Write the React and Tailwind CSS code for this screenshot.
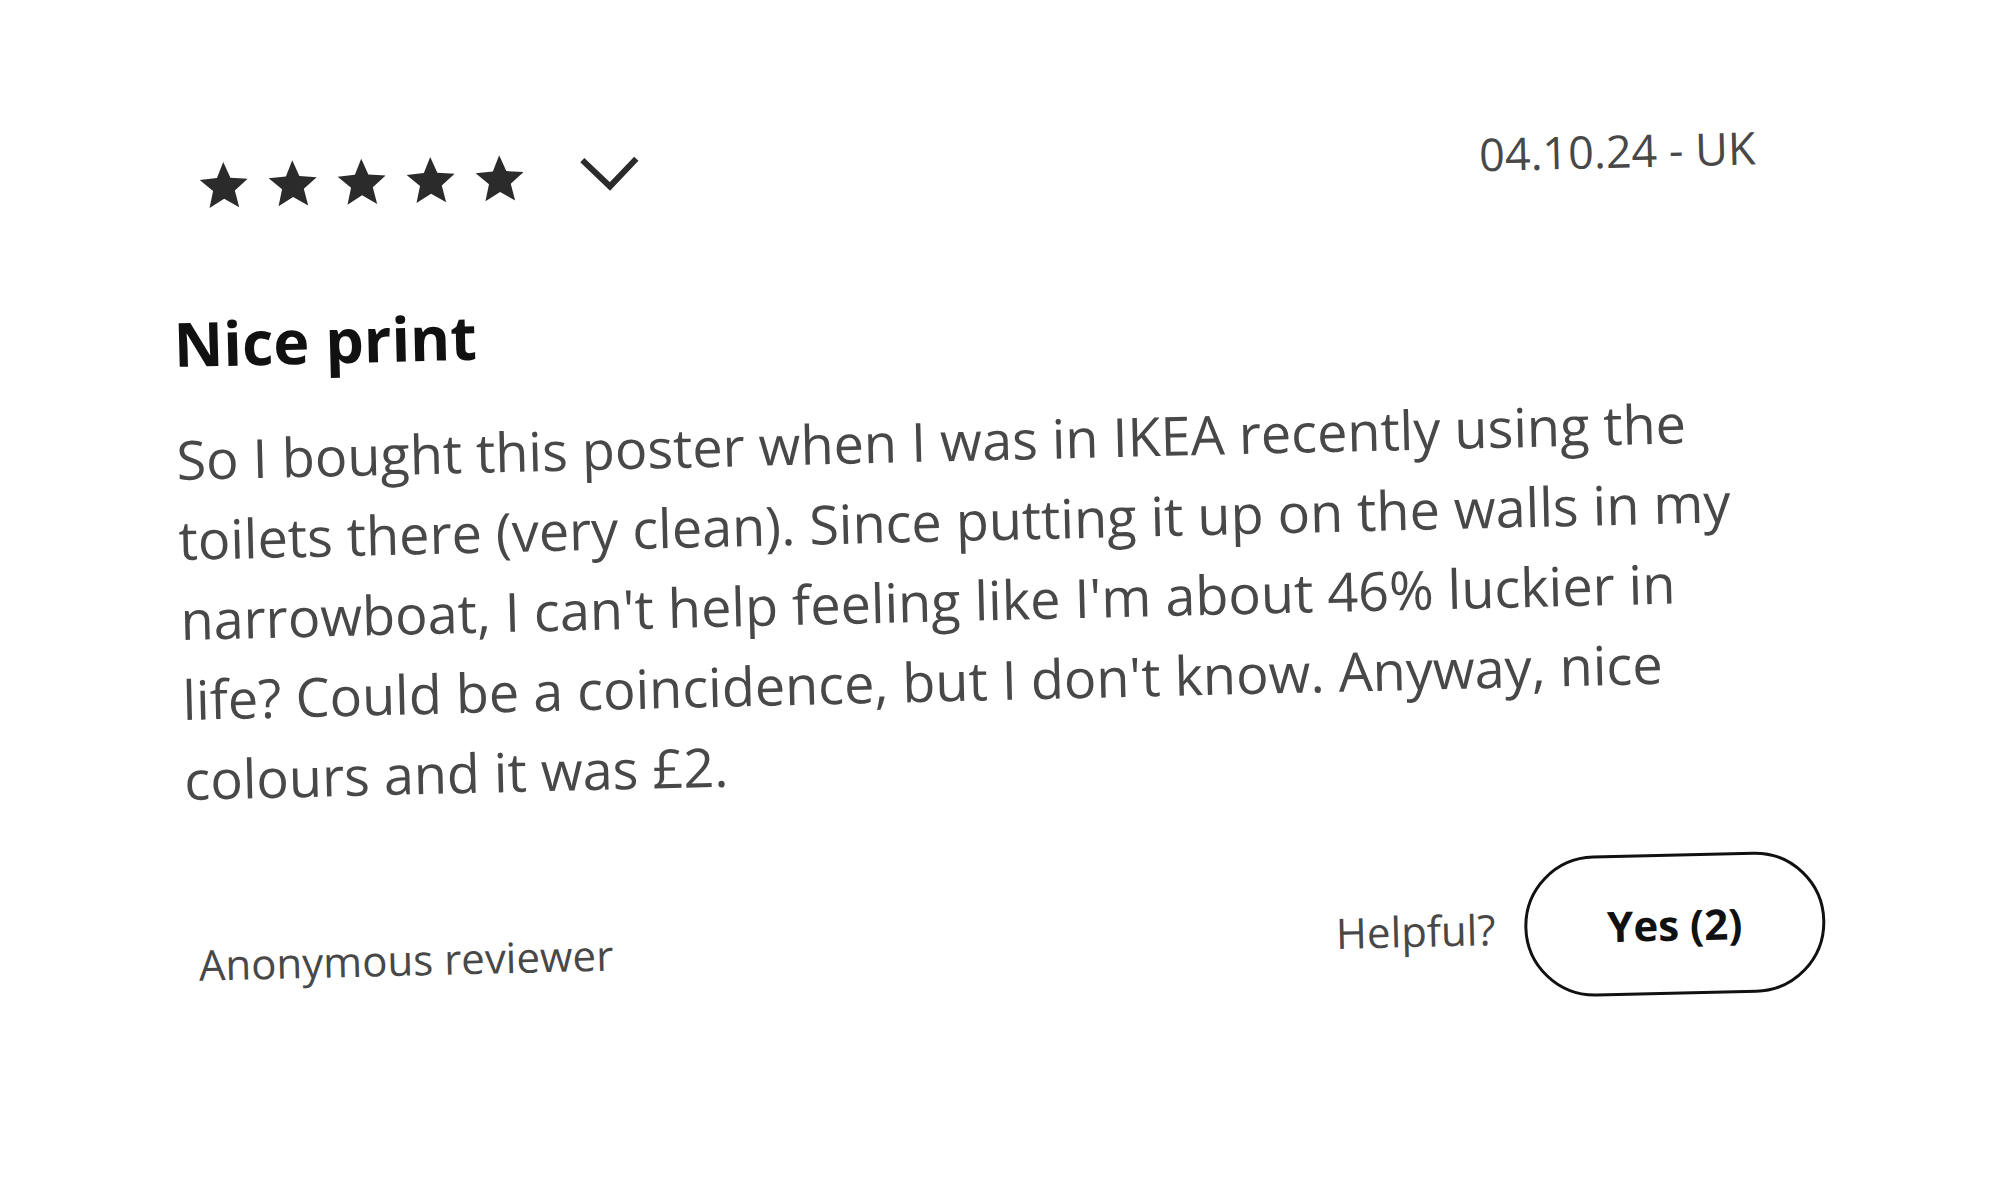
import React from "react";

const Star = () => (
  <svg viewBox="2 2 20 19" className="w-[48px] h-[46px]" fill="#2b2b2b">
    <path d="M12 17.27L18.18 21l-1.64-7.03L22 9.24l-7.19-.61L12 2 9.19 8.63 2 9.24l5.46 4.73L5.82 21z" />
  </svg>
);

const Chevron = () => (
  <svg viewBox="0 0 60 36" className="w-[60px] h-[36px]" fill="none" stroke="#2b2b2b" strokeWidth="6">
    <path d="M3 4l27 27 27-27" />
  </svg>
);

const App = () => {
  const rating = 5;

  return (
    <div className="w-[2000px] h-[1184px] bg-white overflow-hidden font-['Open_Sans','Noto_Sans',sans-serif]">
      <div className="w-full h-full -rotate-[1.4deg] pl-[180px] pr-[183px] pt-[136px]">
        <div className="flex items-center justify-between h-[60px] pr-[51px]">
          <div className="flex items-center ml-[30px]">
            <div className="flex items-center gap-[21px]">
              {Array.from({ length: rating }).map((_, i) => (
                <Star key={i} />
              ))}
            </div>
            <div className="ml-[56px] mt-[-4px]">
              <Chevron />
            </div>
          </div>
          <span className="text-[45px] text-[#484848]">04.10.24 - UK</span>
        </div>

        <h3 className="mt-[90px] text-[61px] leading-[76px] font-bold text-[#111111]">
          Nice print
        </h3>

        <p className="mt-[37px] w-[1590px] text-[54px] leading-[80px] text-[#484848]">
          So I bought this poster when I was in IKEA recently using the toilets
          there (very clean). Since putting it up on the walls in my narrowboat,
          I can't help feeling like I'm about 46% luckier in life? Could be a
          coincidence, but I don't know. Anyway, nice colours and it was £2.
        </p>

        <div className="mt-[71px] flex items-center justify-between">
          <span className="ml-[10px] mt-[8px] text-[42px] text-[#484848]">
            Anonymous reviewer
          </span>
          <div className="flex items-center gap-[29px]">
            <span className="text-[42px] text-[#484848]">Helpful?</span>
            <button className="w-[301px] h-[141px] rounded-full border-[3px] border-[#111111] text-[42px] font-bold text-[#111111]">
              Yes (2)
            </button>
          </div>
        </div>
      </div>
    </div>
  );
};

export default App;
